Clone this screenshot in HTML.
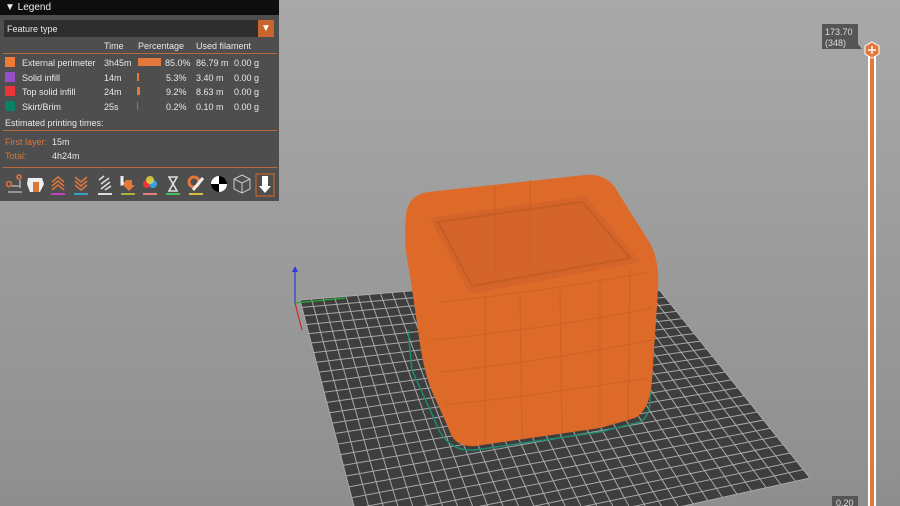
<!DOCTYPE html>
<html><head><meta charset="utf-8"><style>
*{margin:0;padding:0;box-sizing:border-box}
html,body{width:900px;height:506px;overflow:hidden}
body{position:relative;background:linear-gradient(#a9a9a9,#8e8e8e);font-family:"Liberation Sans",sans-serif}
#leg{position:absolute;left:0;top:0;width:279px;height:201px;background:#4e4e4e;color:#e8e8e8;font-size:9px}
#hd{height:15px;background:#0e0e0e;color:#eee;font-size:10px;line-height:15px;padding-left:5px}
.t{position:absolute;white-space:nowrap}
.sw{position:absolute;width:10px;height:10px}
.hr{position:absolute;left:3px;width:274px;height:1px;background:#b8693a}
.or{color:#d9763c}
</style></head><body>
<svg width="900" height="506" style="position:absolute;left:0;top:0;overflow:hidden">
<g id="bed"></g>
<path d="M408,330 L412,370 L440,432 Q452,452 475,450 L600,432 L640,422 Q650,416 650,400 L652,330" fill="none" stroke="#1f8a70" stroke-width="1.5"/>
<path d="M406,215 Q408,195 428,192 L585,175 Q603,173 614,186 L648,240 Q660,258 658,290 L652,380 Q650,410 635,418 L600,428 L475,446 Q455,447 450,432 L436,400 Q424,378 418,330 L410,275 Q403,245 406,215 Z" fill="#de6a2a"/>
<path d="M430,218 L585,196 L640,262 L545,280 L470,294 Z" fill="#d4642a"/>
<path d="M438,222 L582,202 L630,258 L472,286 Z" fill="none" stroke="#bd5a22" stroke-width="2" opacity=".7"/>
<g stroke="#c35c24" stroke-width="1.2" fill="none" opacity=".6">
<path d="M440,302 Q540,292 650,272"/><path d="M430,340 Q540,330 652,308"/><path d="M440,372 Q540,362 652,340"/><path d="M445,405 Q540,395 648,378"/>
<path d="M520,296 L522,440"/><path d="M560,290 L562,435"/><path d="M600,282 L600,428"/><path d="M485,297 L485,443"/><path d="M630,270 L628,420"/>
<path d="M495,185 L495,270"/><path d="M530,180 L530,265"/>
</g>
<line x1="295" y1="303" x2="295" y2="268" stroke="#2b3cd6" stroke-width="1.2"/>
<path d="M292,272 L295,266 L298,272Z" fill="#2b3cd6"/>
<line x1="295" y1="303" x2="345" y2="298" stroke="#2aa83a" stroke-width="1.2"/>
<line x1="295" y1="303" x2="302" y2="330" stroke="#c82a2a" stroke-width="1.2"/>
<rect x="868" y="50" width="8" height="456" fill="#fff"/>
<rect x="870" y="50" width="4" height="456" fill="#e4773a"/>
<path d="M872,42 L879,46 L879,54 L872,58 L865,54 L865,46Z" fill="#e4773a" stroke="#fff" stroke-width="1"/>
<path d="M868,50 H876 M872,46 V54" stroke="#fff" stroke-width="1.5"/>
<path d="M822,24 H858 V44 L862,49 H858 H822Z" fill="#555"/>
<text x="825" y="35" fill="#ddd" font-size="9" font-family="Liberation Sans">173.70</text>
<text x="825" y="46" fill="#ddd" font-size="9" font-family="Liberation Sans">(348)</text>
<rect x="832" y="496" width="26" height="10" fill="#555"/>
<text x="836" y="506" fill="#ddd" font-size="9" font-family="Liberation Sans">0.20</text>
</svg>
<div id="leg">
<div id="hd">▼ Legend</div>
<div style="position:absolute;left:4px;top:20px;width:270px;height:17px;background:#2e2e2e"></div>
<div class="t" style="left:7px;top:24px">Feature type</div>
<div style="position:absolute;left:258px;top:20px;width:16px;height:17px;background:#c8642c;color:#fff;font-size:10px;text-align:center;line-height:17px">▼</div>
<div class="t" style="left:104px;top:41px">Time</div>
<div class="t" style="left:138px;top:41px">Percentage</div>
<div class="t" style="left:196px;top:41px">Used filament</div>
<div class="hr" style="top:53px"></div>
<div class="sw" style="left:5px;top:57px;background:#f07a36"></div>
<div class="sw" style="left:5px;top:72px;background:#9550c8"></div>
<div class="sw" style="left:5px;top:86px;background:#e8363a"></div>
<div class="sw" style="left:5px;top:101px;background:#0a8065"></div>
<div class="t" style="left:22px;top:58px">External perimeter</div>
<div class="t" style="left:22px;top:73px">Solid infill</div>
<div class="t" style="left:22px;top:87px">Top solid infill</div>
<div class="t" style="left:22px;top:102px">Skirt/Brim</div>
<div class="t" style="left:104px;top:58px">3h45m</div>
<div class="t" style="left:104px;top:73px">14m</div>
<div class="t" style="left:104px;top:87px">24m</div>
<div class="t" style="left:104px;top:102px">25s</div>
<div style="position:absolute;left:138px;top:58px;width:23px;height:8px;background:#e4773a"></div>
<div style="position:absolute;left:137px;top:73px;width:2px;height:8px;background:#e4773a"></div>
<div style="position:absolute;left:137px;top:87px;width:3px;height:8px;background:#e4773a"></div>
<div style="position:absolute;left:137px;top:102px;width:1px;height:8px;background:#b8693a"></div>
<div class="t" style="left:165px;top:58px">85.0%</div>
<div class="t" style="left:166px;top:73px">5.3%</div>
<div class="t" style="left:166px;top:87px">9.2%</div>
<div class="t" style="left:166px;top:102px">0.2%</div>
<div class="t" style="left:196px;top:58px">86.79 m</div>
<div class="t" style="left:196px;top:73px">3.40 m</div>
<div class="t" style="left:196px;top:87px">8.63 m</div>
<div class="t" style="left:196px;top:102px">0.10 m</div>
<div class="t" style="left:234px;top:58px">0.00 g</div>
<div class="t" style="left:234px;top:73px">0.00 g</div>
<div class="t" style="left:234px;top:87px">0.00 g</div>
<div class="t" style="left:234px;top:102px">0.00 g</div>
<div class="t" style="left:5px;top:118px">Estimated printing times:</div>
<div class="hr" style="top:130px"></div>
<div class="t or" style="left:5px;top:137px">First layer:</div>
<div class="t" style="left:52px;top:137px">15m</div>
<div class="t or" style="left:5px;top:151px">Total:</div>
<div class="t" style="left:52px;top:151px">4h24m</div>
<div class="hr" style="top:167px"></div>
<svg width="279" height="30" style="position:absolute;left:0;top:172px">
<g fill="none" stroke-width="1.6">
<circle cx="9" cy="12" r="2.5" stroke="#d9763c"/><path d="M12,14 H20 M20,8 V16 M8,20 H22" stroke="#aaa"/><circle cx="19" cy="5" r="2" stroke="#d9763c"/>
<path d="M28,6 H42 L44,12 L40,20 H30 L27,12Z" fill="#eee" stroke="none"/><path d="M33,10 H39 V20 H33Z" fill="#d9763c" stroke="none"/>
<path d="M52,10 L58,5 L64,10 M52,14 L58,9 L64,14 M52,18 L58,13 L64,18" stroke="#d9763c"/><path d="M51,22 H65" stroke="#c040c0" stroke-width="2"/>
<path d="M75,5 L81,10 L87,5 M75,9 L81,14 L87,9 M75,13 L81,18 L87,13" stroke="#d9763c"/><path d="M74,22 H88" stroke="#3aa0c0" stroke-width="2"/>
<path d="M99,8 L104,4 M101,12 L109,6 M101,17 L110,10 M105,18 L111,14" stroke="#ddd"/><path d="M98,22 H112" stroke="#ddd" stroke-width="2"/>
<path d="M122,4 V12 H127" stroke="#eee" stroke-width="3"/><path d="M126,8 H132 V13 H135 L129,19 L123,13" fill="#e4773a" stroke="none"/><path d="M121,22 H135" stroke="#b0b040" stroke-width="2"/>
<circle cx="147" cy="12" r="4" fill="#e8363a" stroke="none"/><circle cx="153" cy="12" r="4" fill="#3aa0e0" stroke="none"/><circle cx="150" cy="8" r="4" fill="#e8e040" stroke="none" opacity=".8"/><path d="M143,22 H157" stroke="#e08080" stroke-width="2"/>
<path d="M169,5 H177 L173,12 L177,19 H169 L173,12Z" stroke="#ddd"/><path d="M166,22 H180" stroke="#40c060" stroke-width="2"/>
<circle cx="194" cy="10" r="5" stroke="#e4773a" stroke-width="3"/><path d="M193,18 L203,6" stroke="#eee" stroke-width="3"/><path d="M189,22 H203" stroke="#d0c040" stroke-width="2"/>
<circle cx="219" cy="12" r="8" fill="#fff" stroke="none"/><path d="M219,4 A8,8 0 0 1 227,12 H219Z M219,20 A8,8 0 0 1 211,12 H219Z" fill="#000" stroke="none"/>
<path d="M242,3 L250,7 V17 L242,21 L234,17 V7Z M234,7 L242,11 L250,7 M242,11 V21" stroke="#ccc" stroke-width="1"/>
<rect x="256" y="2" width="18" height="22" stroke="#c8642c" stroke-width="1.2"/><path d="M262,4 H268 V14 H271 L265,21 L259,14 H262Z" fill="#fff" stroke="none"/>
</g></svg>
</div>
<script>
var g=document.getElementById('bed');var ns='http://www.w3.org/2000/svg';
var A=[300,300],B=[645,272],C=[810,478],D=[372,575];
function lerp(p,q,t){return[p[0]+(q[0]-p[0])*t,p[1]+(q[1]-p[1])*t]}
var poly=document.createElementNS(ns,'polygon');poly.setAttribute('points',[A,B,C,D].map(p=>p.join(',')).join(' '));poly.setAttribute('fill','#3e3e3e');g.appendChild(poly);
var N=30,M=27;
function ln(p,q){var l=document.createElementNS(ns,'line');l.setAttribute('x1',p[0]);l.setAttribute('y1',p[1]);l.setAttribute('x2',q[0]);l.setAttribute('y2',q[1]);l.setAttribute('stroke','#a8a8a8');l.setAttribute('stroke-width','1');g.appendChild(l);}
for(var i=0;i<=N;i++){var t=i/N;ln(lerp(A,B,t),lerp(D,C,t));}
for(var j=0;j<=M;j++){var t=Math.pow(j/M,1.1);ln(lerp(A,D,t),lerp(B,C,t));}
</script>
</body></html>
